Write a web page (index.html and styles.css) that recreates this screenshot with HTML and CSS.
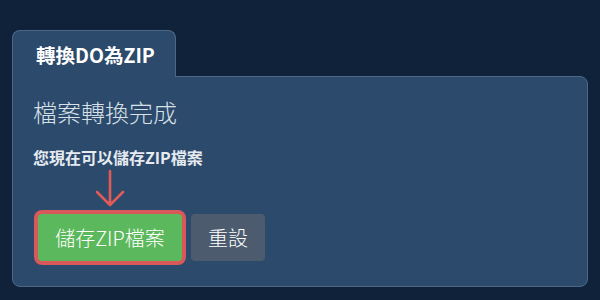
FILE: index.html
```html
<!DOCTYPE html>
<html>
<head>
<meta charset="utf-8">
<meta name="viewport" content="width=device-width, initial-scale=1">
<link rel="stylesheet" href="styles.css">
</head>
<body>

<div class="wrap">
  <div class="tab">轉換DO為ZIP</div>
  <div class="panel">
    <h3 class="title">檔案轉換完成</h3>
    <p class="note">您現在可以儲存ZIP檔案</p>
    <div class="arrow">
      <svg width="30" height="47" viewBox="0 0 30 47">
        <path d="M15 4 V38 M2 25 L15 38 L28 25" fill="none" stroke="#e05a58" stroke-width="2.6" stroke-linecap="round" stroke-linejoin="round"/>
      </svg>
    </div>
    <div class="actions">
      <button class="btn btn-save">儲存ZIP檔案</button>
      <button class="btn btn-reset">重設</button>
    </div>
  </div>
</div>

</body>
</html>
```

FILE: styles.css
```css
* {
  box-sizing: border-box;
}

body {
  margin: 0;
  background: #10223a;
  font-family: "Noto Sans CJK TC", "Noto Sans", sans-serif;
  color: #fff;
}

.wrap {
  padding: 30px 12px 0 12px;
}

.tab {
  display: inline-block;
  position: relative;
  z-index: 1;
  height: 47px;
  margin-bottom: -1px;
  padding: 0 20px 0 23px;
  line-height: 48px;
  font-size: 19.5px;
  font-weight: bold;
  background: #2c4a6b;
  border: 1px solid #4d6887;
  border-bottom: none;
  border-radius: 8px 8px 0 0;
}

.panel {
  background: #2c4a6b;
  border: 1px solid #4d6887;
  border-radius: 0 8px 8px 8px;
  padding: 19px 20px 24px 20px;
  height: 211px;
}

.title {
  margin: 0;
  font-size: 24px;
  line-height: 32px;
  font-weight: 300;
  color: #d8e0e8;
}

.note {
  margin: 19px 0 0 0;
  font-size: 16px;
  line-height: 20px;
  font-weight: bold;
  color: #e6ebf1;
}

.arrow {
  width: 144px;
  height: 47px;
  margin-left: 5px;
  display: flex;
  justify-content: center;
}

.actions {
  display: flex;
  gap: 9px;
  padding-left: 5px;
}

.btn {
  height: 47px;
  padding: 0 17px;
  border: none;
  border-radius: 4px;
  font-family: inherit;
  font-size: 20px;
  font-weight: 300;
  color: #fff;
}

.btn-save {
  width: 144px;
  background: #5cb85c;
  box-shadow: 0 0 0 4px #d9585a;
}

.btn-reset {
  background: #4c5c6e;
}
```
